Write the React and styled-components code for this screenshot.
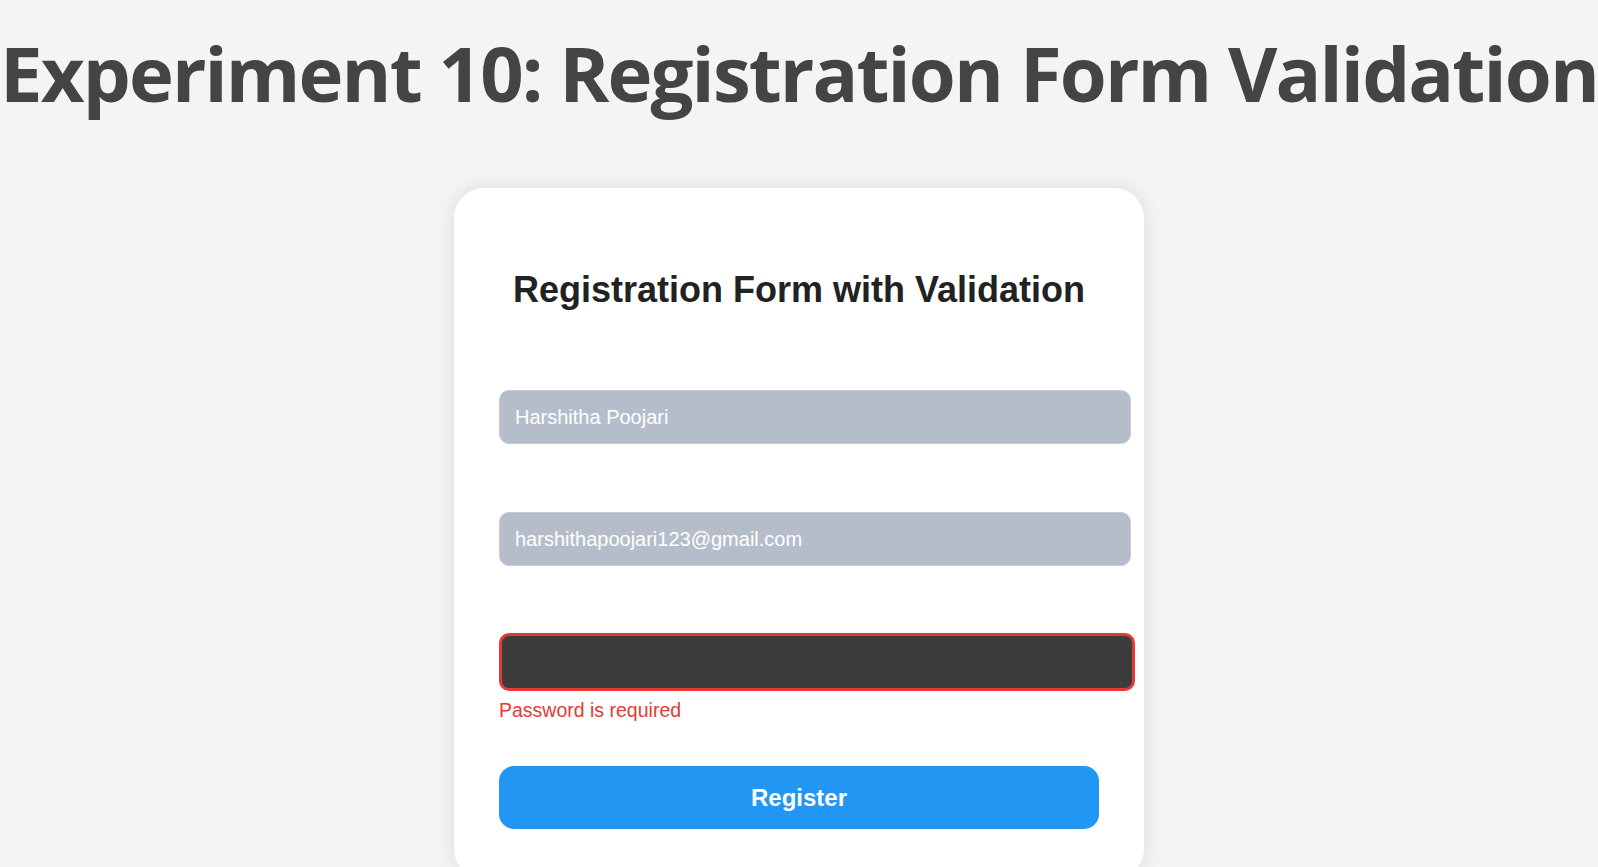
import React from "react";
import styled, { createGlobalStyle } from "styled-components";

const GlobalStyle = createGlobalStyle`
  html, body {
    margin: 0;
    padding: 0;
    background: #f4f4f4;
  }
  body {
    font-family: "Liberation Sans", Arial, sans-serif;
    overflow: hidden;
  }
`;

const Page = styled.div`
  display: flex;
  flex-direction: column;
  align-items: center;
  padding: 27px 0 0;
  min-height: 100vh;
  box-sizing: border-box;
`;

const PageTitle = styled.h1`
  margin: 0;
  font-family: "Open Sans", "Noto Sans", sans-serif;
  font-weight: 700;
  font-size: 76px;
  line-height: 91px;
  color: #444444;
  white-space: nowrap;
  letter-spacing: -1.9px;
`;

const Card = styled.div`
  margin-top: 70px;
  width: 600px;
  padding: 45px 45px 50px;
  background: #ffffff;
  border-radius: 30px;
  box-shadow: 0 0 20px rgba(0, 0, 0, 0.1);
`;

const CardTitle = styled.h2`
  margin: 36px 0 80px;
  font-family: "Liberation Sans", Arial, sans-serif;
  font-weight: 700;
  font-size: 36px;
  line-height: 41px;
  color: #222222;
  text-align: center;
`;

const Form = styled.form`
  display: flex;
  flex-direction: column;
`;

const Field = styled.div`
  display: flex;
  flex-direction: column;
  margin-bottom: 44px;
`;

const Input = styled.input`
  display: block;
  box-sizing: content-box;
  width: 600px;
  margin: 0;
  padding: 15px;
  font-family: "Liberation Sans", Arial, sans-serif;
  font-size: 20px;
  line-height: 22px;
  height: 22px;
  border-radius: 10px;
  outline: none;
  border: ${(p) => (p.$invalid ? "3px solid #e53935" : "1px solid #c6cbd3")};
  background: ${(p) => (p.$invalid ? "#3c3c3c" : "#b6bdca")};
  color: #ffffff;
`;

const ErrorText = styled.div`
  font-family: "Liberation Sans", Arial, sans-serif;
  font-size: 19.5px;
  line-height: 23px;
  color: #e53935;
  margin-top: ${(p) => (p.$empty ? "0" : "8px")};
  min-height: ${(p) => (p.$empty ? "23.5px" : "23px")};
`;

const SubmitButton = styled.button`
  display: block;
  width: 600px;
  height: 63px;
  border: none;
  border-radius: 15px;
  background: #2196f3;
  color: #ffffff;
  font-family: "Liberation Sans", Arial, sans-serif;
  font-weight: 700;
  font-size: 24px;
  cursor: pointer;
`;

const fields = [
  { type: "text", value: "Harshitha Poojari", error: "" },
  { type: "email", value: "harshithapoojari123@gmail.com", error: "" },
  { type: "password", value: "", error: "Password is required" },
];

export default function App() {
  return (
    <>
      <GlobalStyle />
      <Page>
        <PageTitle>Experiment 10: Registration Form Validation</PageTitle>
        <Card>
          <CardTitle>Registration Form with Validation</CardTitle>
          <Form onSubmit={(e) => e.preventDefault()}>
            {fields.map((f, i) => (
              <Field key={i}>
                <Input
                  type={f.type}
                  defaultValue={f.value}
                  $invalid={!!f.error}
                  readOnly
                />
                <ErrorText $empty={!f.error}>{f.error}</ErrorText>
              </Field>
            ))}
            <SubmitButton type="submit">Register</SubmitButton>
          </Form>
        </Card>
      </Page>
    </>
  );
}
